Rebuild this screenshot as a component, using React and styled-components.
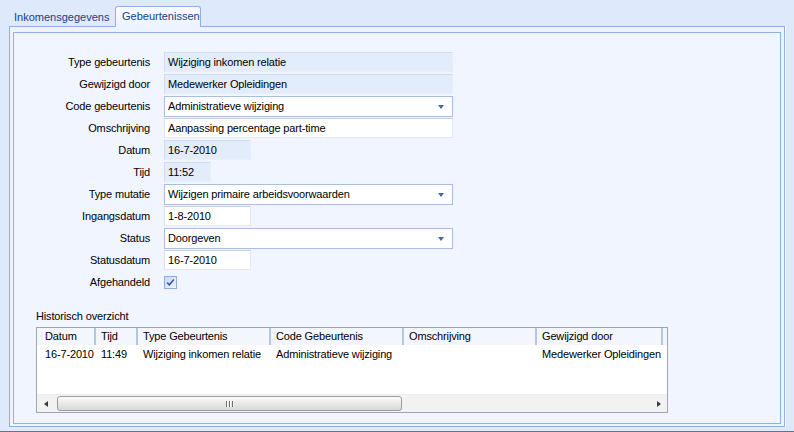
import React from 'react';
import styled, { createGlobalStyle } from 'styled-components';

const Global = createGlobalStyle`
  html, body { margin: 0; padding: 0; }
  body {
    background: #dfe9fc;
    font-family: "Liberation Sans", Arial, sans-serif;
    font-size: 11px;
    letter-spacing: -0.15px;
    color: #000;
  }
`;

const Window = styled.div`
  width: 794px;
  height: 432px;
  box-sizing: border-box;
  border-bottom: 1px solid #5574a8;
  display: flex;
  flex-direction: column;
  overflow: hidden;
  background: #dfe9fc;
`;

const TabStrip = styled.div`
  height: 26px;
  display: flex;
  align-items: flex-end;
  padding-left: 8px;
`;

const Tab = styled.div`
  position: relative;
  z-index: 1;
  box-sizing: border-box;
  width: ${p => p.$w}px;
  height: ${p => (p.$active ? 21 : 19)}px;
  margin-bottom: ${p => (p.$active ? -1 : 0)}px;
  padding: ${p => (p.$active ? '3px 0 0 6px' : '4px 0 0 6px')};
  color: #15428b;
  font-size: 11px;
  letter-spacing: 0;
  line-height: 13px;
  white-space: nowrap;
  ${p => p.$active && `
    border: 1px solid #8db1e3;
    border-bottom: none;
    border-radius: 3px 3px 0 0;
    background: linear-gradient(#f8fbff, #edf3ff);
  `}
`;

const OuterPanel = styled.div`
  box-sizing: border-box;
  margin-left: 9px;
  width: 776px;
  height: 401px;
  border: 1px solid #8db1e3;
  background: #edf3ff;
  box-shadow: 1px 0 0 #ffffff;
  padding: 5px 3px 2px 3px;
  display: flex;
`;

const InnerPanel = styled.div`
  flex: 1;
  border: 1px solid #8db1e3;
  background: #f0f5ff;
  display: flex;
  flex-direction: column;
`;

const Form = styled.div`
  display: grid;
  grid-template-columns: 136px auto;
  grid-auto-rows: 20px;
  column-gap: 14px;
  row-gap: 2px;
  padding-top: 19px;
  justify-items: start;
  align-items: center;
`;

const Label = styled.div`
  justify-self: end;
  line-height: 20px;
  white-space: nowrap;
`;

const Field = styled.div`
  box-sizing: border-box;
  width: ${p => p.$w}px;
  height: 20px;
  line-height: 18px;
  padding-left: 3px;
  white-space: nowrap;
  overflow: hidden;
  background: ${p => (p.$readonly ? '#e2ecfb' : '#ffffff')};
  border: 1px solid;
  border-color: ${p =>
    p.$readonly
      ? '#d0dcef #e8eff9 #e8eff9 #d0dcef'
      : '#c4ccd8 #e4eaf3 #e4eaf3 #dbe3ee'};
`;

const Combo = styled.div`
  box-sizing: border-box;
  width: 289px;
  height: 21px;
  display: flex;
  align-items: center;
  justify-content: space-between;
  padding: 0 8px 0 3px;
  background: #ffffff;
  border: 1px solid #a8bfe2;
  white-space: nowrap;
`;

const Arrow = styled.span`
  width: 0;
  height: 0;
  border-left: 3.5px solid transparent;
  border-right: 3.5px solid transparent;
  border-top: 4px solid #4a67a3;
  margin-top: 2px;
`;

const Check = styled.div`
  box-sizing: border-box;
  width: 13px;
  height: 13px;
  border: 1px solid #8eaee0;
  background: linear-gradient(135deg, #cbd9f0, #eef3fc);
  display: flex;
  align-items: center;
  justify-content: center;
`;

const History = styled.div`
  margin: 18px 0 0 22px;
  display: flex;
  flex-direction: column;
  gap: 4px;
`;

const HistoryTitle = styled.div`
  line-height: 13px;
`;

const Grid = styled.div`
  box-sizing: border-box;
  width: 632px;
  height: 86px;
  border: 1px solid #a0a4ab;
  background: #ffffff;
  display: flex;
  flex-direction: column;
`;

const Row = styled.div`
  display: grid;
  grid-template-columns: 59px 42px 133px 133px 133px 126px;
  height: 17px;
  background: ${p => (p.$header ? '#f3f7fd' : '#ffffff')};
`;

const HeadCell = styled.div`
  box-sizing: border-box;
  padding-left: ${p => (p.$first ? 8 : 5)}px;
  line-height: 17px;
  white-space: nowrap;
  border-right: 2px solid #b2c7e7;
`;

const Cell = styled.div`
  padding-left: ${p => (p.$first ? 8 : 5)}px;
  padding-top: 2px;
  line-height: 15px;
  white-space: nowrap;
  overflow: hidden;
`;

const Spacer = styled.div`
  flex: 1;
`;

const HScroll = styled.div`
  height: 17px;
  display: flex;
  align-items: stretch;
  background: #f2f2f2;
  border-top: 1px solid #ececec;
`;

const ScrollBtn = styled.div`
  width: 17px;
  display: flex;
  align-items: center;
  justify-content: center;
`;

const Tri = styled.span`
  width: 0;
  height: 0;
  border-top: 3.5px solid transparent;
  border-bottom: 3.5px solid transparent;
  ${p => (p.$dir === 'left' ? 'border-right: 4px solid #3a3a3a;' : 'border-left: 4px solid #3a3a3a;')}
`;

const Thumb = styled.div`
  box-sizing: border-box;
  margin: 1px 0 1px 3px;
  width: 345px;
  border: 1px solid #9c9c9c;
  border-radius: 3px;
  background: linear-gradient(#fbfbfb, #e9e9e9 50%, #d9d9d9);
  display: flex;
  align-items: center;
  justify-content: center;
  gap: 2px;
`;

const Grip = styled.span`
  width: 1px;
  height: 6px;
  background: #6f6f6f;
  box-shadow: 1px 0 0 #ffffff;
`;

const Track = styled.div`
  flex: 1;
`;

const rows = [
  { label: 'Type gebeurtenis', kind: 'ro', w: 289, value: 'Wijziging inkomen relatie' },
  { label: 'Gewijzigd door', kind: 'ro', w: 289, value: 'Medewerker Opleidingen' },
  { label: 'Code gebeurtenis', kind: 'combo', value: 'Administratieve wijziging' },
  { label: 'Omschrijving', kind: 'edit', w: 289, value: 'Aanpassing percentage part-time' },
  { label: 'Datum', kind: 'ro', w: 87, value: '16-7-2010' },
  { label: 'Tijd', kind: 'ro', w: 47, value: '11:52' },
  { label: 'Type mutatie', kind: 'combo', value: 'Wijzigen primaire arbeidsvoorwaarden' },
  { label: 'Ingangsdatum', kind: 'edit', w: 87, value: '1-8-2010' },
  { label: 'Status', kind: 'combo', value: 'Doorgeven' },
  { label: 'Statusdatum', kind: 'edit', w: 87, value: '16-7-2010' },
];

const columns = ['Datum', 'Tijd', 'Type Gebeurtenis', 'Code Gebeurtenis', 'Omschrijving', 'Gewijzigd door'];
const data = ['16-7-2010', '11:49', 'Wijziging inkomen relatie', 'Administratieve wijziging', '', 'Medewerker Opleidingen'];

export default function App() {
  return (
    <>
      <Global />
      <Window>
        <TabStrip>
          <Tab $w={107}>Inkomensgegevens</Tab>
          <Tab $w={86} $active>Gebeurtenissen</Tab>
        </TabStrip>
        <OuterPanel>
          <InnerPanel>
            <Form>
              {rows.map(r => (
                <React.Fragment key={r.label}>
                  <Label>{r.label}</Label>
                  {r.kind === 'combo' ? (
                    <Combo>
                      <span>{r.value}</span>
                      <Arrow />
                    </Combo>
                  ) : (
                    <Field $w={r.w} $readonly={r.kind === 'ro'}>{r.value}</Field>
                  )}
                </React.Fragment>
              ))}
              <Label>Afgehandeld</Label>
              <Check>
                <svg width="9" height="9" viewBox="0 0 9 9">
                  <path d="M1.2 4.6 L3.4 6.8 L7.8 1.6" fill="none" stroke="#3557a6" strokeWidth="1.5" />
                </svg>
              </Check>
            </Form>
            <History>
              <HistoryTitle>Historisch overzicht</HistoryTitle>
              <Grid>
                <Row $header>
                  {columns.map((c, i) => (
                    <HeadCell key={c} $first={i === 0}>{c}</HeadCell>
                  ))}
                </Row>
                <Row>
                  {data.map((d, i) => (
                    <Cell key={i} $first={i === 0}>{d}</Cell>
                  ))}
                </Row>
                <Spacer />
                <HScroll>
                  <ScrollBtn><Tri $dir="left" /></ScrollBtn>
                  <Thumb><Grip /><Grip /><Grip /></Thumb>
                  <Track />
                  <ScrollBtn><Tri $dir="right" /></ScrollBtn>
                </HScroll>
              </Grid>
            </History>
          </InnerPanel>
        </OuterPanel>
      </Window>
    </>
  );
}
